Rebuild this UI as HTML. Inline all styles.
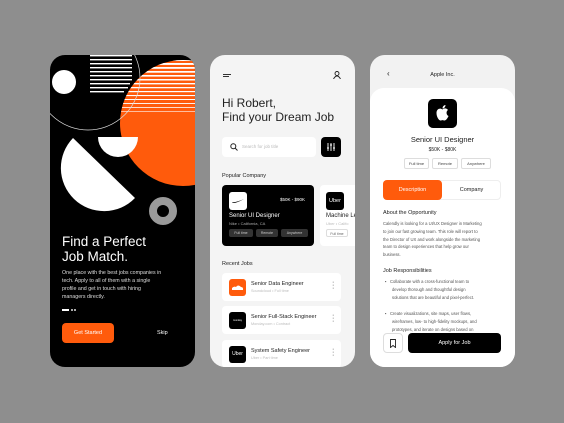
<!DOCTYPE html>
<html><head><meta charset="utf-8"><style>
*{margin:0;padding:0;box-sizing:border-box}
body{width:564px;height:423px;background:#8e8e8e;position:relative;overflow:hidden;font-family:"Liberation Sans",sans-serif}
.ph{position:absolute;top:55px;width:145px;height:312px;border-radius:15px;overflow:hidden}
.a{position:absolute}
.t{position:absolute;white-space:nowrap}
</style></head><body>

<!-- Phone 1 -->
<div class="ph" style="left:50px;background:#000">
<svg class="a" style="left:0;top:0" width="145" height="312">
<defs>
<clipPath id="oc"><circle cx="133" cy="68" r="63"/></clipPath>
<clipPath id="lc"><circle cx="38" cy="23" r="52"/></clipPath>
</defs>
<circle cx="133" cy="68" r="63" fill="#ff5b0c"/>
<g clip-path="url(#oc)" fill="#fff">
<rect x="60" y="0" width="100" height="2.2"/><rect x="60" y="4" width="100" height="2"/><rect x="60" y="8" width="100" height="1.9"/><rect x="60" y="12" width="100" height="1.8"/><rect x="60" y="16" width="100" height="1.7"/><rect x="60" y="20" width="100" height="1.6"/><rect x="60" y="24" width="100" height="1.5"/><rect x="60" y="28" width="100" height="1.4"/><rect x="60" y="32" width="100" height="1.3"/><rect x="60" y="36" width="100" height="1.2"/><rect x="60" y="40" width="100" height="1.1"/><rect x="60" y="44" width="100" height="1"/><rect x="60" y="48" width="100" height="0.9"/><rect x="60" y="52" width="100" height="0.8"/><rect x="60" y="56" width="100" height="0.6"/>
</g>
<g clip-path="url(#lc)" fill="#fff">
<rect x="40" y="0" width="42" height="1.4"/><rect x="40" y="4" width="42" height="1.4"/><rect x="40" y="8" width="42" height="1.4"/><rect x="40" y="12" width="42" height="1.4"/><rect x="40" y="16" width="42" height="1.4"/><rect x="40" y="20" width="42" height="1.4"/><rect x="40" y="24" width="42" height="1.4"/><rect x="40" y="28" width="40" height="1.4"/><rect x="40" y="32" width="38" height="1.4"/><rect x="40" y="36" width="34" height="1.4"/>
</g>
<circle cx="38" cy="23" r="52" fill="none" stroke="#ddd" stroke-width="0.7"/>
<circle cx="14" cy="27" r="12" fill="#fff"/>
<path d="M48 82 A20 20 0 0 0 88 82 Z" fill="#fff"/>
<path d="M23 83 L85 143 A43 43 0 0 1 23 83 Z" fill="#fff"/>
<circle cx="113" cy="156" r="10" fill="none" stroke="#9a9a9a" stroke-width="8"/>
</svg>
<div class="t" style="left:12px;top:179px;color:#fff;font-size:13.5px;line-height:15px">Find a Perfect<br>Job Match.</div>
<div class="t" style="left:12px;top:214px;color:#ddd;font-size:5.3px;line-height:8px">One place with the best jobs companies in<br>tech. Apply to all of them with a single<br>profile and get in touch with hiring<br>managers directly.</div>
<div class="a" style="left:12px;top:254px;width:7px;height:1.5px;background:#fff"></div>
<div class="a" style="left:21px;top:254px;width:1.5px;height:1.5px;background:#aaa"></div>
<div class="a" style="left:24px;top:254px;width:1.5px;height:1.5px;background:#aaa"></div>
<div class="a" style="left:12px;top:268px;width:52px;height:20px;border-radius:4px;background:#ff5b0c;color:#fff;font-size:5.5px;text-align:center;line-height:20px">Get Started</div>
<div class="t" style="left:107px;top:275px;color:#fff;font-size:5.5px">Skip</div>
</div>

<!-- Phone 2 -->
<div class="ph" style="left:210px;background:#f4f4f4">
<div class="a" style="left:13px;top:19px;width:8px;height:1px;background:#333"></div>
<div class="a" style="left:13px;top:21px;width:6px;height:1px;background:#333"></div>
<svg class="a" style="left:123px;top:16px" width="8" height="8"><circle cx="4" cy="2.5" r="2" fill="none" stroke="#222" stroke-width="0.9"/><path d="M0.5 8 Q4 2 7.5 8" fill="none" stroke="#222" stroke-width="0.9"/></svg>
<div class="t" style="left:12px;top:41px;font-size:12px;line-height:14px;color:#222">Hi Robert,<br>Find your Dream Job</div>
<div class="a" style="left:12px;top:82px;width:94px;height:20px;background:#fff;border-radius:4px"></div>
<svg class="a" style="left:20px;top:88px" width="8" height="8"><circle cx="3.3" cy="3.3" r="2.5" fill="none" stroke="#222" stroke-width="1"/><path d="M5 5 L7.5 7.5" stroke="#222" stroke-width="1"/></svg>
<div class="t" style="left:32px;top:89px;font-size:4.5px;color:#bbb">Search for job title</div>
<div class="a" style="left:111px;top:82px;width:20px;height:20px;background:#000;border-radius:4px"></div>
<svg class="a" style="left:116px;top:87px" width="10" height="10"><path d="M2 1V9M5 1V9M8 1V9" stroke="#fff" stroke-width="0.9"/><path d="M1 6H3M4 3H6M7 6H9" stroke="#fff" stroke-width="1.1"/></svg>
<div class="t" style="left:12px;top:118px;font-size:5.5px;color:#222">Popular Company</div>
<div class="a" style="left:12px;top:130px;width:92px;height:61px;background:#000;border-radius:4px"></div>
<div class="a" style="left:19px;top:137px;width:18px;height:18px;background:#fff;border-radius:3px"></div>
<svg class="a" style="left:21px;top:142px" width="14" height="8"><path d="M1 5 Q2 8 13 2 Q4 6 1 5Z" fill="#000"/></svg>
<div class="t" style="left:70px;top:142px;font-size:4.5px;color:#fff">$50K - $90K</div>
<div class="t" style="left:19px;top:158px;font-size:6px;color:#fff">Senior UI Designer</div>
<div class="t" style="left:19px;top:166px;font-size:4px;color:#aaa">Nike • California, CA</div>
<div class="a" style="left:19px;top:174px;width:24px;height:8px;background:#333;border-radius:2px;font-size:3.5px;color:#ccc;text-align:center;line-height:8px">Full time</div>
<div class="a" style="left:46px;top:174px;width:22px;height:8px;background:#333;border-radius:2px;font-size:3.5px;color:#ccc;text-align:center;line-height:8px">Remote</div>
<div class="a" style="left:71px;top:174px;width:27px;height:8px;background:#333;border-radius:2px;font-size:3.5px;color:#ccc;text-align:center;line-height:8px">Anywhere</div>
<div class="a" style="left:110px;top:130px;width:40px;height:61px;background:#fff;border-radius:4px"></div>
<div class="a" style="left:116px;top:137px;width:18px;height:18px;background:#000;border-radius:3px;color:#fff;font-size:5.5px;text-align:center;line-height:18px">Uber</div>
<div class="t" style="left:116px;top:158px;font-size:6px;color:#222">Machine Le</div>
<div class="t" style="left:116px;top:166px;font-size:4px;color:#bbb">Uber • Califo</div>
<div class="a" style="left:116px;top:174px;width:22px;height:8px;border:0.5px solid #ddd;border-radius:2px;font-size:3.5px;color:#666;text-align:center;line-height:8px">Full time</div>
<div class="t" style="left:12px;top:206px;font-size:5.5px;color:#222">Recent Jobs</div>
<div class="a" style="left:12px;top:218px;width:119px;height:28px;background:#fff;border-radius:4px"></div>
<div class="a" style="left:12px;top:251px;width:119px;height:28px;background:#fff;border-radius:4px"></div>
<div class="a" style="left:12px;top:285px;width:119px;height:28px;background:#fff;border-radius:4px"></div>
<div class="a" style="left:19px;top:224px;width:17px;height:17px;background:#ff5b0c;border-radius:3px"></div>
<svg class="a" style="left:21px;top:229px" width="13" height="7"><path d="M1 6 V4 Q3 2 5 3 Q7 0 10 3 Q12.5 3 12 6Z" fill="#fff"/></svg>
<div class="a" style="left:19px;top:257px;width:17px;height:17px;background:#000;border-radius:3px;color:#fff;font-size:2.5px;text-align:center;line-height:17px">monday</div>
<div class="a" style="left:19px;top:291px;width:17px;height:17px;background:#000;border-radius:3px;color:#fff;font-size:5px;text-align:center;line-height:17px">Uber</div>
<div class="t" style="left:41px;top:226px;font-size:5.5px;color:#222">Senior Data Engineer</div>
<div class="t" style="left:41px;top:234px;font-size:3.8px;color:#bbb">Soundcloud • Full time</div>
<div class="t" style="left:41px;top:259px;font-size:5.5px;color:#222">Senior Full-Stack Engineer</div>
<div class="t" style="left:41px;top:267px;font-size:3.8px;color:#bbb">Monday.com • Contract</div>
<div class="t" style="left:41px;top:293px;font-size:5.5px;color:#222">System Safety Engineer</div>
<div class="t" style="left:41px;top:301px;font-size:3.8px;color:#bbb">Uber • Part time</div>
<div class="t" style="left:122px;top:226px;font-size:7px;color:#333;line-height:3px">·<br>·<br>·</div>
<div class="t" style="left:122px;top:259px;font-size:7px;color:#333;line-height:3px">·<br>·<br>·</div>
<div class="t" style="left:122px;top:293px;font-size:7px;color:#333;line-height:3px">·<br>·<br>·</div>
</div>

<!-- Phone 3 -->
<div class="ph" style="left:370px;background:#f2f2f2">
<div class="t" style="left:17px;top:14px;font-size:8px;color:#222">‹</div>
<div class="t" style="left:0;width:145px;text-align:center;top:17px;font-size:5.5px;color:#222">Apple Inc.</div>
<div class="a" style="left:0;top:33px;width:145px;height:290px;background:#fff;border-radius:14px 14px 0 0"></div>
<div class="a" style="left:58px;top:44px;width:29px;height:29px;background:#000;border-radius:5px"></div>
<svg class="a" style="left:65px;top:49px" width="15" height="18"><path d="M7.5 5.5 C5 3.5 1.5 5 1.5 9 C1.5 13 4 17 6 16.5 C7 16 8 16 9 16.5 C11 17 13 13.5 13.5 12 C11 11 11 7 13 6 C11.5 4 9 4 7.5 5.5Z M7.5 4.5 C7.5 2.5 9 1 10.5 1 C10.5 3 9 4.5 7.5 4.5Z" fill="#fff"/></svg>
<div class="t" style="left:0;width:145px;text-align:center;top:80px;font-size:7.5px;color:#222">Senior UI Designer</div>
<div class="t" style="left:0;width:145px;text-align:center;top:92px;font-size:5px;color:#222">$50K - $80K</div>
<div class="a" style="left:34px;top:103px;width:25px;height:11px;border:0.6px solid #ddd;border-radius:2px;font-size:4px;text-align:center;line-height:10px;color:#444">Full time</div>
<div class="a" style="left:62px;top:103px;width:26px;height:11px;border:0.6px solid #ddd;border-radius:2px;font-size:4px;text-align:center;line-height:10px;color:#444">Remote</div>
<div class="a" style="left:91px;top:103px;width:30px;height:11px;border:0.6px solid #ddd;border-radius:2px;font-size:4px;text-align:center;line-height:10px;color:#444">Anywhere</div>
<div class="a" style="left:13px;top:125px;width:118px;height:20px;border:0.6px solid #eee;border-radius:4px"></div>
<div class="a" style="left:13px;top:125px;width:59px;height:20px;background:#ff5b0c;border-radius:4px;color:#fff;font-size:5.5px;text-align:center;line-height:20px">Description</div>
<div class="t" style="left:72px;width:59px;text-align:center;top:132px;font-size:5.5px;color:#222">Company</div>
<div class="t" style="left:13px;top:155px;font-size:5.5px;color:#222">About the Opportunity</div>
<div class="t" style="left:13px;top:165px;font-size:4.2px;line-height:7.8px;color:#555">Calendly is looking for a UI/UX Designer in Marketing<br>to join our fast growing team. This role will report to<br>the Director of UX and work alongside the marketing<br>team to design experiences that help grow our<br>business.</div>
<div class="t" style="left:13px;top:213px;font-size:5.5px;color:#222">Job Responsibilities</div>
<div class="t" style="left:15px;top:223px;font-size:4.2px;line-height:8px;color:#555">▪&nbsp;&nbsp; Collaborate with a cross-functional team to<br>&nbsp;&nbsp;&nbsp;&nbsp;&nbsp; develop thorough and thoughtful design<br>&nbsp;&nbsp;&nbsp;&nbsp;&nbsp; solutions that are beautiful and pixel-perfect.</div>
<div class="t" style="left:15px;top:255px;font-size:4.2px;line-height:8px;color:#555">▪&nbsp;&nbsp; Create visualizations, site maps, user flows,<br>&nbsp;&nbsp;&nbsp;&nbsp;&nbsp; wireframes, low- to high-fidelity mockups, and<br>&nbsp;&nbsp;&nbsp;&nbsp;&nbsp; prototypes, and iterate on designs based on</div>
<div class="a" style="left:13px;top:278px;width:20px;height:20px;background:#fff;border:0.6px solid #ddd;border-radius:4px"></div>
<svg class="a" style="left:19px;top:284px" width="8" height="9"><path d="M1.5 0.5H6.5V8.5L4 6.5L1.5 8.5Z" fill="none" stroke="#222" stroke-width="0.9"/></svg>
<div class="a" style="left:38px;top:278px;width:93px;height:20px;background:#000;border-radius:4px;color:#fff;font-size:5.5px;text-align:center;line-height:20px">Apply for Job</div>
</div>
</body></html>
